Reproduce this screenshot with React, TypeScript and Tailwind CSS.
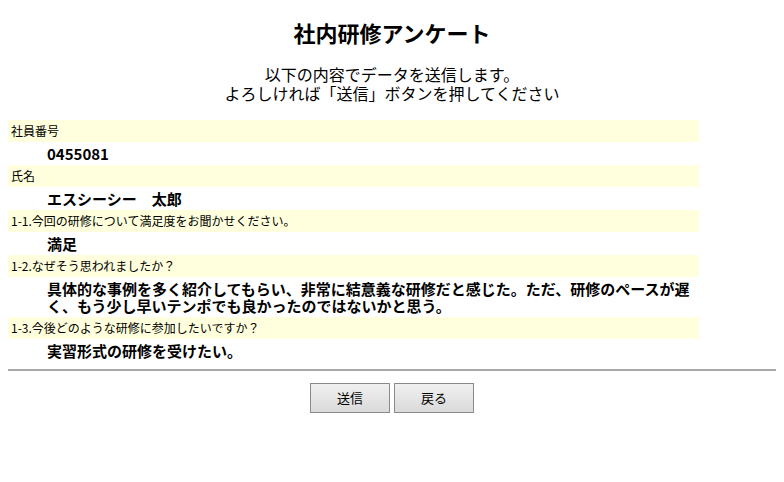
import React from "react";

interface Answer {
  label: string;
  value: string;
}

const answers: Answer[] = [
  { label: "社員番号", value: "0455081" },
  { label: "氏名", value: "エスシーシー　太郎" },
  { label: "1-1.今回の研修について満足度をお聞かせください。", value: "満足" },
  {
    label: "1-2.なぜそう思われましたか？",
    value:
      "具体的な事例を多く紹介してもらい、非常に結意義な研修だと感じた。ただ、研修のペースが遅く、もう少し早いテンポでも良かったのではないかと思う。",
  },
  { label: "1-3.今後どのような研修に参加したいですか？", value: "実習形式の研修を受けたい。" },
];

export default function App() {
  return (
    <div
      className="w-[784px] h-[482px] bg-white text-black"
      style={{ fontFamily: '"Noto Sans CJK JP", "Noto Sans", sans-serif' }}
    >
      <div className="pt-[18px] text-center">
        <h1 className="text-[22px] leading-[28px] font-bold">社内研修アンケート</h1>
        <p className="mt-[19px] text-[16px] leading-[19px]">
          以下の内容でデータを送信します。
          <br />
          よろしければ「送信」ボタンを押してください
        </p>
      </div>

      <div className="mt-[17px] ml-[8px] w-[691px] flex flex-col">
        {answers.map((a) => (
          <div key={a.label} className="flex flex-col">
            <div className="h-[22px] bg-[#ffffdd] pl-[3px] flex items-center text-[12px] leading-[14px]">
              {a.label}
            </div>
            <div className="min-h-[23px] py-[3px] pl-[39px] pr-[4px] text-[15px] leading-[17px] font-bold">
              {a.value}
            </div>
          </div>
        ))}
      </div>

      <hr className="mt-[7px] mx-[8px] border-0 border-t-2 border-[#a8a8a8]" />

      <div className="mt-[12px] flex justify-center gap-[4px]">
        <button className="w-[80px] h-[30px] border border-[#8a8a8a] bg-gradient-to-b from-[#f0f0f0] to-[#dadada] text-[13px]">
          送信
        </button>
        <button className="w-[80px] h-[30px] border border-[#8a8a8a] bg-gradient-to-b from-[#f0f0f0] to-[#dadada] text-[13px]">
          戻る
        </button>
      </div>
    </div>
  );
}
